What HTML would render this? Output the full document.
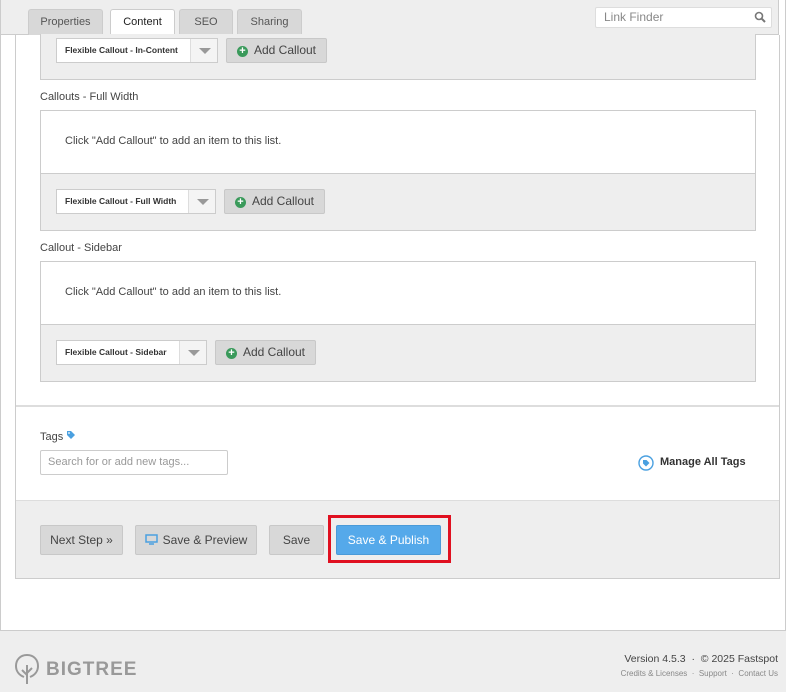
<!DOCTYPE html><html><head><style>
*{box-sizing:border-box;margin:0;padding:0}
body{width:786px;height:692px;background:#fff;font-family:"Liberation Sans",Arial,sans-serif;position:relative;overflow:hidden;color:#333}
.a{position:absolute}
.tab{position:absolute;top:9px;height:26px;background:#d8d8d8;border:1px solid #ccc;border-bottom:none;border-radius:3px 3px 0 0;font-size:11px;color:#555;text-align:center;line-height:24px}
.box{position:absolute;left:40px;width:716px;border:1px solid #ccc;background:#fff}
.gray{background:#eee;border-top:1px solid #ccc;position:absolute;left:0;right:0}
.sel{position:absolute;height:25px;background:#fff;border:1px solid #ccc;font-size:8.5px;font-weight:bold;color:#333;line-height:23px;padding-left:8px}
.sel .ar{position:absolute;right:0;top:0;width:27px;height:23px;border-left:1px solid #ddd;background:#f4f4f4}
.sel .ar:after{content:"";position:absolute;left:8px;top:9px;border-left:6px solid transparent;border-right:6px solid transparent;border-top:6px solid #999}
.btn{position:absolute;height:25px;background:#d8d8d8;border:1px solid #c8c8c8;border-radius:2px;font-size:12px;color:#444;line-height:23px;text-align:center}
.plus{display:inline-block;width:11px;height:11px;border-radius:50%;background:#3a9a5b;color:#fff;font-size:11px;line-height:11px;font-weight:bold;vertical-align:0px;margin-right:6px}
.lbl{position:absolute;left:40px;font-size:11px;color:#444}
.msg{position:absolute;left:24px;top:24px;font-size:11px;color:#444}
.ab{position:absolute;top:525px;height:30px;background:#d8d8d8;border:1px solid #c8c8c8;border-radius:2px;font-size:12px;color:#444;line-height:28px;text-align:center}
</style></head><body>
<div class="a" style="left:0;top:0;width:779px;height:35px;background:#eee;border-left:1px solid #ccc;border-right:1px solid #ccc;border-bottom:1px solid #ccc"></div>
<div class="a" style="left:0;top:35px;width:1px;height:595px;background:#ccc"></div>
<div class="a" style="left:785px;top:0;width:1px;height:630px;background:#ccc"></div>
<div class="tab" style="left:28px;width:75px">Properties</div>
<div class="tab" style="left:110px;width:65px;background:#fff;color:#222;height:27px">Content</div>
<div class="tab" style="left:179px;width:54px">SEO</div>
<div class="tab" style="left:237px;width:65px">Sharing</div>
<div class="a" style="left:595px;top:7px;width:177px;height:21px;background:#fff;border:1px solid #ddd;border-radius:2px;font-size:12px;color:#888;line-height:19px;padding-left:8px">Link Finder
<svg class="a" style="right:5px;top:3px" width="12" height="12" viewBox="0 0 12 12"><circle cx="5" cy="5" r="3.5" fill="none" stroke="#777" stroke-width="1.6"/><path d="M7.5 7.5L11 11" stroke="#777" stroke-width="2"/></svg></div>
<div class="a" style="left:15px;top:35px;width:765px;height:544px;border:1px solid #ccc;border-top:none;background:#fff"></div>
<div class="box" style="top:34px;height:46px;border-top:none;background:#eee"></div>
<div class="sel" style="left:56px;top:38px;width:162px">Flexible Callout - In-Content<div class="ar"></div></div>
<div class="btn" style="left:226px;top:38px;width:101px"><span class="plus">+</span>Add Callout</div>
<div class="lbl" style="top:91px">Callouts - Full Width</div>
<div class="box" style="top:110px;height:121px"><div class="msg">Click "Add Callout" to add an item to this list.</div><div class="gray" style="top:62px;bottom:0"></div></div>
<div class="sel" style="left:56px;top:189px;width:160px">Flexible Callout - Full Width<div class="ar"></div></div>
<div class="btn" style="left:224px;top:189px;width:101px"><span class="plus">+</span>Add Callout</div>
<div class="lbl" style="top:242px">Callout - Sidebar</div>
<div class="box" style="top:261px;height:121px"><div class="msg">Click "Add Callout" to add an item to this list.</div><div class="gray" style="top:62px;bottom:0"></div></div>
<div class="sel" style="left:56px;top:340px;width:151px">Flexible Callout - Sidebar<div class="ar"></div></div>
<div class="btn" style="left:215px;top:340px;width:101px"><span class="plus">+</span>Add Callout</div>
<div class="a" style="left:16px;top:405px;width:763px;height:2px;background:#ddd"></div>
<div class="lbl" style="top:430px">Tags <svg width="10" height="10" viewBox="0 0 10 10" style="vertical-align:0"><path d="M1 1h4l4 4-4 4-4-4z" fill="#4aa0e0"/><circle cx="3" cy="3" r="0.9" fill="#fff"/></svg></div>
<div class="a" style="left:40px;top:450px;width:188px;height:25px;border:1px solid #ccc;border-radius:2px;font-size:11px;color:#999;line-height:23px;padding-left:7px">Search for or add new tags...</div>
<svg class="a" style="left:638px;top:455px" width="16" height="16" viewBox="0 0 16 16"><circle cx="8" cy="8" r="7" fill="none" stroke="#4aa0e0" stroke-width="1.4"/><path d="M5 5h3.5l3 3-3.5 3.5-3-3z" fill="#4aa0e0"/></svg>
<div class="a" style="left:660px;top:456px;font-size:11px;font-weight:bold;color:#333">Manage All Tags</div>
<div class="a" style="left:16px;top:500px;width:763px;height:78px;background:#eee;border-top:1px solid #ddd"></div>
<div class="ab" style="left:40px;width:83px">Next Step »</div>
<div class="ab" style="left:135px;width:122px"><svg width="13" height="11" viewBox="0 0 13 11" style="vertical-align:-1px;margin-right:5px"><rect x="1" y="1" width="11" height="7" fill="none" stroke="#4aa0e0" stroke-width="1.5"/><path d="M4 10h5" stroke="#4aa0e0" stroke-width="1.5"/></svg>Save &amp; Preview</div>
<div class="ab" style="left:269px;width:55px">Save</div>
<div class="a" style="left:328px;top:515px;width:123px;height:48px;border:3px solid #e01020"></div>
<div class="ab" style="left:336px;width:105px;background:#55a9ea;border-color:#4a9ad8;color:#fff">Save &amp; Publish</div>
<div class="a" style="left:0;top:630px;width:786px;height:62px;background:#eee;border-top:1px solid #ccc"></div>
<svg class="a" style="left:14px;top:653px" width="28" height="32" viewBox="0 0 28 32"><path d="M13 31V12M13 22l-5-5M13 20l5-5" stroke="#999" stroke-width="2" fill="none"/><path d="M13 2C6 2 2 7 2 13c0 5 3 9 8 11M13 2c7 0 11 5 11 11 0 5-3 9-8 11" stroke="#999" stroke-width="2" fill="none"/></svg>
<div class="a" style="left:46px;top:659px;font-size:19px;font-weight:bold;color:#999;letter-spacing:1px">BIGTREE</div>
<div class="a" style="right:8px;top:653px;font-size:10.5px;color:#444">Version 4.5.3 &nbsp;·&nbsp; © 2025 Fastspot</div>
<div class="a" style="right:8px;top:669px;font-size:8px;color:#888">Credits &amp; Licenses &nbsp;·&nbsp; Support &nbsp;·&nbsp; Contact Us</div>
</body></html>
